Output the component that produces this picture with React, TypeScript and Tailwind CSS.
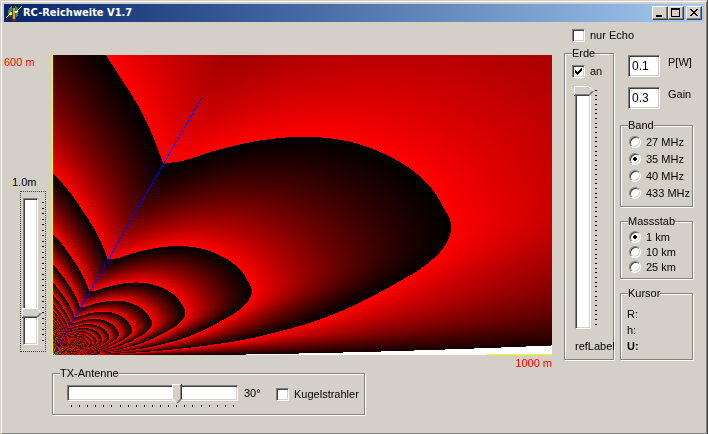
import { useLayoutEffect, useRef, useState, type ReactNode } from "react";
import { clsx } from "clsx";

const PLOT_W = 500;
const PLOT_H = 300;

// [elevation in degrees, radius of the first 256-unit contour in px]
const BELOW_AXIS: [number, number][] = [
  [0, 0],
  [2.2, 96],
  [4.5, 187],
  [5.75, 221],
  [7, 255],
  [8.6, 290],
  [10.5, 326],
  [12, 354],
  [13.1, 376],
  [14.4, 395],
  [15.8, 409],
  [17, 416],
  [18, 419],
  [19.1, 420],
  [20.6, 418],
  [21.8, 417],
  [23.8, 414],
  [27.4, 404],
  [31.5, 387],
  [35.7, 366],
  [41, 333],
  [48.4, 282],
  [52.7, 254],
  [56, 235],
  [60, 221],
];
const ABOVE_AXIS: [number, number][] = [
  [60, 221],
  [63.6, 234],
  [68.9, 255],
  [75.6, 283],
  [79.8, 304],
  [85.3, 336],
  [90, 365],
];

function sample(table: [number, number][], x: number) {
  let i = 0;
  while (i < table.length - 2 && x > table[i + 1][0]) i++;
  const [x1, y1] = table[i];
  const [x2, y2] = table[i + 1];
  const d = (y2 - y1) / (x2 - x1);
  const prev = table[i - 1];
  const next = table[i + 2];
  const m1 = prev ? (y2 - prev[1]) / (x2 - prev[0]) : d;
  const m2 = next ? (next[1] - y1) / (next[0] - x1) : d;
  const h = x2 - x1;
  const t = (x - x1) / h;
  const t2 = t * t;
  const t3 = t2 * t;
  return (
    (2 * t3 - 3 * t2 + 1) * y1 +
    (t3 - 2 * t2 + t) * h * m1 +
    (3 * t2 - 2 * t3) * y2 +
    (t3 - t2) * h * m2
  );
}

function drawField(ctx: CanvasRenderingContext2D) {
  const img = ctx.createImageData(PLOT_W, PLOT_H);
  const put = (x: number, y: number, r: number, g: number, b: number) => {
    const i = ((PLOT_H - 1 - y) * PLOT_W + x) * 4;
    img.data[i] = r;
    img.data[i + 1] = g;
    img.data[i + 2] = b;
    img.data[i + 3] = 255;
  };

  for (let y = 0; y < PLOT_H; y++) {
    for (let x = 0; x < PLOT_W; x++) {
      const h = y + 0.8;
      const r = Math.hypot(x, h);
      const elevation = (Math.atan2(h, x) * 180) / Math.PI;
      const lobe = sample(elevation < 60 ? BELOW_AXIS : ABOVE_AXIS, elevation);
      // voltage goes straight into the colour word: low byte red, next byte green
      const u = Math.floor((256 * lobe) / r);
      if (x * x > 23400 * (y + 1.6)) put(x, y, 255, 255, 255);
      else put(x, y, u & 255, (u >> 8) & 255, 0);
    }
  }

  // antenna axis, 30° off the vertical
  for (let y = 0; y < 258; y++) put(Math.round(y * 0.5774) + 1, y, 0, 0, 255);
  for (let y = 0; y < PLOT_H; y++) put(0, y, 255, 255, 0);
  for (let x = 435; x < PLOT_W; x++) put(x, 0, 255, 255, 0);
  ctx.putImageData(img, 0, 0);
}

function FieldPlot() {
  const ref = useRef<HTMLCanvasElement>(null);
  useLayoutEffect(() => {
    const ctx = ref.current?.getContext("2d");
    if (ctx) drawField(ctx);
  }, []);
  return (
    <canvas
      ref={ref}
      width={PLOT_W}
      height={PLOT_H}
      aria-label="Feldstärke"
      className="block w-full [image-rendering:pixelated]"
    />
  );
}

const SUNKEN =
  "border border-t-[#808080] border-l-[#808080] border-b-white border-r-white shadow-[inset_1px_1px_#404040,inset_-1px_-1px_#d4d0c8]";

function GroupBox({
  title,
  className,
  children,
}: {
  title: string;
  className?: string;
  children: ReactNode;
}) {
  return (
    <fieldset
      className={clsx(
        "min-w-0 border border-[#808080] shadow-[1px_1px_#fff,inset_1px_1px_#fff]",
        className
      )}
    >
      <legend className="ml-[7px] bg-[#d4d0c8] leading-[14px]">{title}</legend>
      {children}
    </fieldset>
  );
}

function Check({ label, defaultChecked }: { label: string; defaultChecked?: boolean }) {
  return (
    <label className="flex items-center gap-[5px]">
      <span className="grid size-[13px] shrink-0">
        <input
          type="checkbox"
          defaultChecked={defaultChecked}
          className={clsx("peer col-start-1 row-start-1 size-[13px] appearance-none bg-white", SUNKEN)}
        />
        <svg
          viewBox="0 0 13 13"
          shapeRendering="crispEdges"
          className="pointer-events-none invisible col-start-1 row-start-1 size-[13px] peer-checked:visible"
        >
          <path d="M3 5h1v3h-1zM4 6h1v3h-1zM5 7h1v3h-1zM6 6h1v3h-1zM7 5h1v3h-1zM8 4h1v3h-1zM9 3h1v3h-1z" />
        </svg>
      </span>
      {label}
    </label>
  );
}

function RadioList({
  name,
  options,
  selected,
  rowClass,
}: {
  name: string;
  options: string[];
  selected: string;
  rowClass: string;
}) {
  return (
    <div className="flex flex-col pt-px pl-2">
      {options.map((option) => (
        <label key={option} className={clsx("flex items-center gap-[5px] whitespace-nowrap", rowClass)}>
          <input
            type="radio"
            name={name}
            defaultChecked={option === selected}
            className={clsx(
              "size-3 shrink-0 appearance-none rounded-full bg-white checked:bg-[radial-gradient(circle,#000_2px,#fff_2px)]",
              SUNKEN
            )}
          />
          {option}
        </label>
      ))}
    </div>
  );
}

function Ticks({ count, vertical, className }: { count: number; vertical?: boolean; className: string }) {
  return (
    <div className={clsx("flex justify-between", vertical ? "flex-col" : "flex-row", className)}>
      {Array.from({ length: count }, (_, i) => (
        <span key={i} className={clsx("bg-black", vertical ? "h-px w-0.5" : "h-0.5 w-px")} />
      ))}
    </div>
  );
}

function Thumb({ vertical }: { vertical?: boolean }) {
  return vertical ? (
    <svg viewBox="0 0 20 10" fill="none" className="h-[10px] w-5">
      <path d="M0 0h15l5 5l-5 5h-15z" fill="#d4d0c8" />
      <path d="M1 8.5h14l4-4" stroke="#808080" />
      <path d="M0 9.5h15l4.5-4.5" stroke="#404040" />
      <path d="M0.5 9v-8.5h14.5l4.5 4.5" stroke="#fff" />
    </svg>
  ) : (
    <svg viewBox="0 0 10 20" fill="none" className="h-5 w-[10px]">
      <path d="M0 0h10v15l-5 5l-5-5z" fill="#d4d0c8" />
      <path d="M8.5 1v14l-4 4" stroke="#808080" />
      <path d="M9.5 0v15l-4.5 4.5" stroke="#404040" />
      <path d="M9 0.5h-8.5v14.5l4.5 4.5" stroke="#fff" />
    </svg>
  );
}

function Slider({
  label,
  initial,
  max,
  ticks,
  vertical,
  className,
}: {
  label: string;
  initial: number;
  max: number;
  ticks: number;
  vertical?: boolean;
  className?: string;
}) {
  const [value, setValue] = useState(initial);
  const share = value / max;
  return (
    <div className={clsx("relative flex", vertical ? "flex-row gap-1" : "flex-col gap-1", className)}>
      <div className={clsx("bg-white", vertical ? "ml-px w-4" : "mt-px h-4", SUNKEN)} />
      <Ticks count={ticks} vertical={vertical} className={vertical ? "my-1" : "mx-1"} />
      <div
        className={clsx("absolute", vertical ? "left-0" : "top-0")}
        style={
          vertical
            ? { top: `calc(${share} * (100% - 10px))` }
            : { left: `calc(${share} * (100% - 10px))` }
        }
      >
        <Thumb vertical={vertical} />
      </div>
      <input
        type="range"
        aria-label={label}
        min={0}
        max={max}
        value={value}
        onChange={(e) => setValue(Number(e.target.value))}
        className={clsx("absolute inset-0 size-full opacity-0", vertical && "[writing-mode:vertical-lr]")}
      />
    </div>
  );
}

function NumberField({ label, value }: { label: string; value: string }) {
  return (
    <label className="flex items-start gap-2 pl-2">
      <input
        type="text"
        defaultValue={value}
        className={clsx("h-[22px] w-8 shrink-0 bg-white px-[3px] text-xs", SUNKEN)}
      />
      {label}
    </label>
  );
}

function CaptionButton({ label, d }: { label: string; d: string }) {
  return (
    <button
      type="button"
      aria-label={label}
      className="h-[14px] w-4 border border-t-white border-l-white border-b-[#404040] border-r-[#404040] bg-[#d4d0c8] shadow-[inset_-1px_-1px_#808080]"
    >
      <svg viewBox="0 0 14 12" shapeRendering="crispEdges" className="h-3 w-[14px]">
        <path d={d} fillRule="evenodd" />
      </svg>
    </button>
  );
}

function AppIcon() {
  return (
    <svg viewBox="0 0 16 16" shapeRendering="crispEdges" className="size-4">
      <path d="M5 0h5l3 3v7l-3 4h-6l-3-4v-6z" fill="#10303c" />
      <path d="M3 3l3-2v4l-2 3h-2zM9 1l3 3v6l-2 2h-1z" fill="#3f7fa0" />
      <path d="M2 8h3v4h-2z" fill="#2c6a3c" />
      <path d="M6 3h4v12h-4z" fill="#5c5020" />
      <path d="M7 3h2v11h-2z" fill="#b8a850" />
      <path d="M16 1l-4 5l-1 2h-2v-2h1zM0 13l3-4l1-2h2v3h-2z" fill="#ffff20" />
      <path d="M6 14h4v2h-4z" fill="#a01010" />
    </svg>
  );
}

export default function App() {
  return (
    <div className="w-full border border-t-[#d4d0c8] border-l-[#d4d0c8] border-b-[#404040] border-r-[#404040] bg-[#d4d0c8] font-['Liberation_Sans',Arial,sans-serif] text-[11px] leading-[14px] text-black">
      <div className="border border-t-white border-l-white border-b-[#808080] border-r-[#808080] p-0.5">
        <header className="flex h-[18px] items-center bg-linear-to-r from-[#0a246a] to-[#a6caf0] px-0.5">
          <AppIcon />
          <h1 className="ml-px flex-1 font-['DejaVu_Sans_Condensed','DejaVu_Sans',sans-serif] text-[11px] font-bold text-white">
            RC-Reichweite V1.7
          </h1>
          <div className="flex">
            <CaptionButton label="Minimieren" d="M3 8h6v2h-6z" />
            <CaptionButton label="Maximieren" d="M2 1h9v9h-9zM3 3v6h7v-6z" />
          </div>
          <div className="ml-0.5 flex">
            <CaptionButton
              label="Schließen"
              d="M3 2h2v1h1v1h2v-1h1v-1h2v1h-1v1h-1v1h-1v1h1v1h1v1h1v1h-2v-1h-1v-1h-2v1h-1v1h-2v-1h1v-1h1v-1h1v-1h-1v-1h-1v-1h-1z"
            />
          </div>
        </header>

        <main className="flex items-start pb-4">
          <aside className="w-12 shrink-0 pt-[33px]">
            <p className="text-[#ff0000]">600 m</p>
            <p className="mt-[106px] pl-2">1.0m</p>
            <div className="mt-0.5 ml-4 w-[26px] border border-dotted border-[#404040] px-px py-1.5">
              <Slider label="Antennenhöhe" initial={80} max={100} ticks={26} vertical className="h-[147px]" />
            </div>
          </aside>

          <section className="min-w-0 flex-1 pt-[33px]">
            <FieldPlot />
            <p className="h-[11px] text-right leading-4 text-[#ff0000]">1000 m</p>
            <GroupBox title="TX-Antenne" className="h-[49px] w-[313px]">
              <div className="flex items-start pt-1 pl-[14px]">
                <Slider label="Antennenwinkel" initial={65} max={100} ticks={21} className="w-[171px]" />
                <span className="mt-0.5 ml-1.5 w-8">30°</span>
                <div className="mt-[3px]">
                  <Check label="Kugelstrahler" />
                </div>
              </div>
            </GroupBox>
          </section>

          <section className="ml-3 w-[50px] shrink-0 pt-1.5">
            <div className="pl-2 whitespace-nowrap">
              <Check label="nur Echo" />
            </div>
            <GroupBox title="Erde" className="mt-1 h-[314px]">
              <div className="pt-1 pl-[7px]">
                <Check label="an" defaultChecked />
              </div>
              <Slider label="Erde" initial={0} max={100} ticks={51} vertical className="mt-2 ml-[9px] h-[243px]" />
              <p className="mt-2.5 pl-2.5 whitespace-nowrap">refLabel</p>
            </GroupBox>
          </section>

          <section className="mr-[11px] ml-1.5 w-[73px] shrink-0 pt-[33px]">
            <NumberField label="P[W]" value="0.1" />
            <div className="mt-2.5">
              <NumberField label="Gain" value="0.3" />
            </div>
            <GroupBox title="Band" className="mt-[9px] h-[89px]">
              <RadioList
                name="band"
                options={["27 MHz", "35 MHz", "40 MHz", "433 MHz"]}
                selected="35 MHz"
                rowClass="h-[17px]"
              />
            </GroupBox>
            <GroupBox title="Massstab" className="mt-[7px] h-[65px]">
              <RadioList
                name="massstab"
                options={["1 km", "10 km", "25 km"]}
                selected="1 km"
                rowClass="h-[15px]"
              />
            </GroupBox>
            <GroupBox title="Kursor" className="mt-[7px] h-[74px]">
              <div className="pt-1.5 pl-1.5 leading-4">
                <p>R:</p>
                <p>h:</p>
                <p className="font-bold">U:</p>
              </div>
            </GroupBox>
          </section>
        </main>
      </div>
    </div>
  );
}
